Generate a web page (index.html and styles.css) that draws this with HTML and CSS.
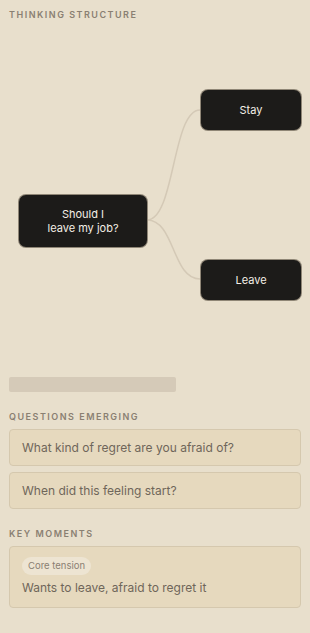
FILE: index.html
```html
<!DOCTYPE html>
<html>
<head>
<meta charset="utf-8">
<link rel="stylesheet" href="styles.css">
</head>
<body>
<div class="panel">
  <div class="section-title first">THINKING STRUCTURE</div>
  <div class="canvas">
    <svg class="edges" width="310" height="335" viewBox="0 0 310 335">
      <path d="M147 190 C 175 190, 172 80, 200 80" />
      <path d="M147 190 C 175 190, 172 249, 200 249" />
    </svg>
    <div class="node root">Should I<br>leave my job?</div>
    <div class="node stay">Stay</div>
    <div class="node leave">Leave</div>
  </div>
  <div class="bar"></div>
  <div class="section-title">QUESTIONS EMERGING</div>
  <div class="cards">
    <div class="card">What kind of regret are you afraid of?</div>
    <div class="card">When did this feeling start?</div>
  </div>
  <div class="section-title">KEY MOMENTS</div>
  <div class="card moment">
    <span class="pill">Core tension</span>
    <div class="moment-text">Wants to leave, afraid to regret it</div>
  </div>
</div>
</body>
</html>
```
FILE: styles.css
```css
html, body {
  margin: 0;
  padding: 0;
  background: #e8dfcc;
}
body {
  font-family: Inter, "Noto Sans", sans-serif;
  width: 310px;
  height: 633px;
  overflow: hidden;
}
.panel {
  padding: 9px 9px 0 9px;
}
.section-title {
  font-size: 9px;
  line-height: 12px;
  font-weight: 600;
  letter-spacing: 1.5px;
  color: #8a8072;
  margin-top: 19px;
  margin-bottom: 6px;
}
.section-title.first {
  margin-top: 0;
  margin-bottom: 0;
}
.canvas {
  position: relative;
  height: 335px;
  margin: 9px -9px 0 -9px;
}
.edges {
  position: absolute;
  left: 0;
  top: 0;
}
.edges path {
  fill: none;
  stroke: #d4c9b6;
  stroke-width: 1.5;
}
.node {
  position: absolute;
  background: #1c1b19;
  color: #f4efe6;
  border-radius: 7px;
  font-size: 11px;
  line-height: 14px;
  display: flex;
  align-items: center;
  justify-content: center;
  text-align: center;
  box-shadow: 0 0 0 1px #8f8676;
}
.root {
  left: 19px;
  top: 165px;
  width: 128px;
  height: 52px;
}
.stay {
  left: 201px;
  top: 60px;
  width: 100px;
  height: 40px;
  padding-bottom: 1px;
  box-sizing: border-box;
}
.leave {
  left: 201px;
  top: 230px;
  width: 100px;
  height: 40px;
  padding-bottom: 1px;
  box-sizing: border-box;
}
.bar {
  margin-top: 12px;
  width: 167px;
  height: 15px;
  border-radius: 2px;
  background: #d5cab8;
}
.cards {
  display: flex;
  flex-direction: column;
  gap: 6px;
}
.card {
  background: #e6d9be;
  border: 1px solid #d5c8ae;
  border-radius: 4px;
  padding: 0 12px;
  height: 35px;
  display: flex;
  align-items: center;
  font-size: 12px;
  color: #6f665a;
}
.card.moment {
  height: auto;
  display: block;
  padding: 10px 12px 11px 12px;
  margin-top: 6px;
}
.pill {
  display: inline-block;
  background: #ede4d2;
  color: #8a8072;
  font-size: 9.5px;
  line-height: 18px;
  padding: 0 6px;
  border-radius: 9px;
}
.moment-text {
  margin-top: 4px;
  line-height: 17px;
}
```
